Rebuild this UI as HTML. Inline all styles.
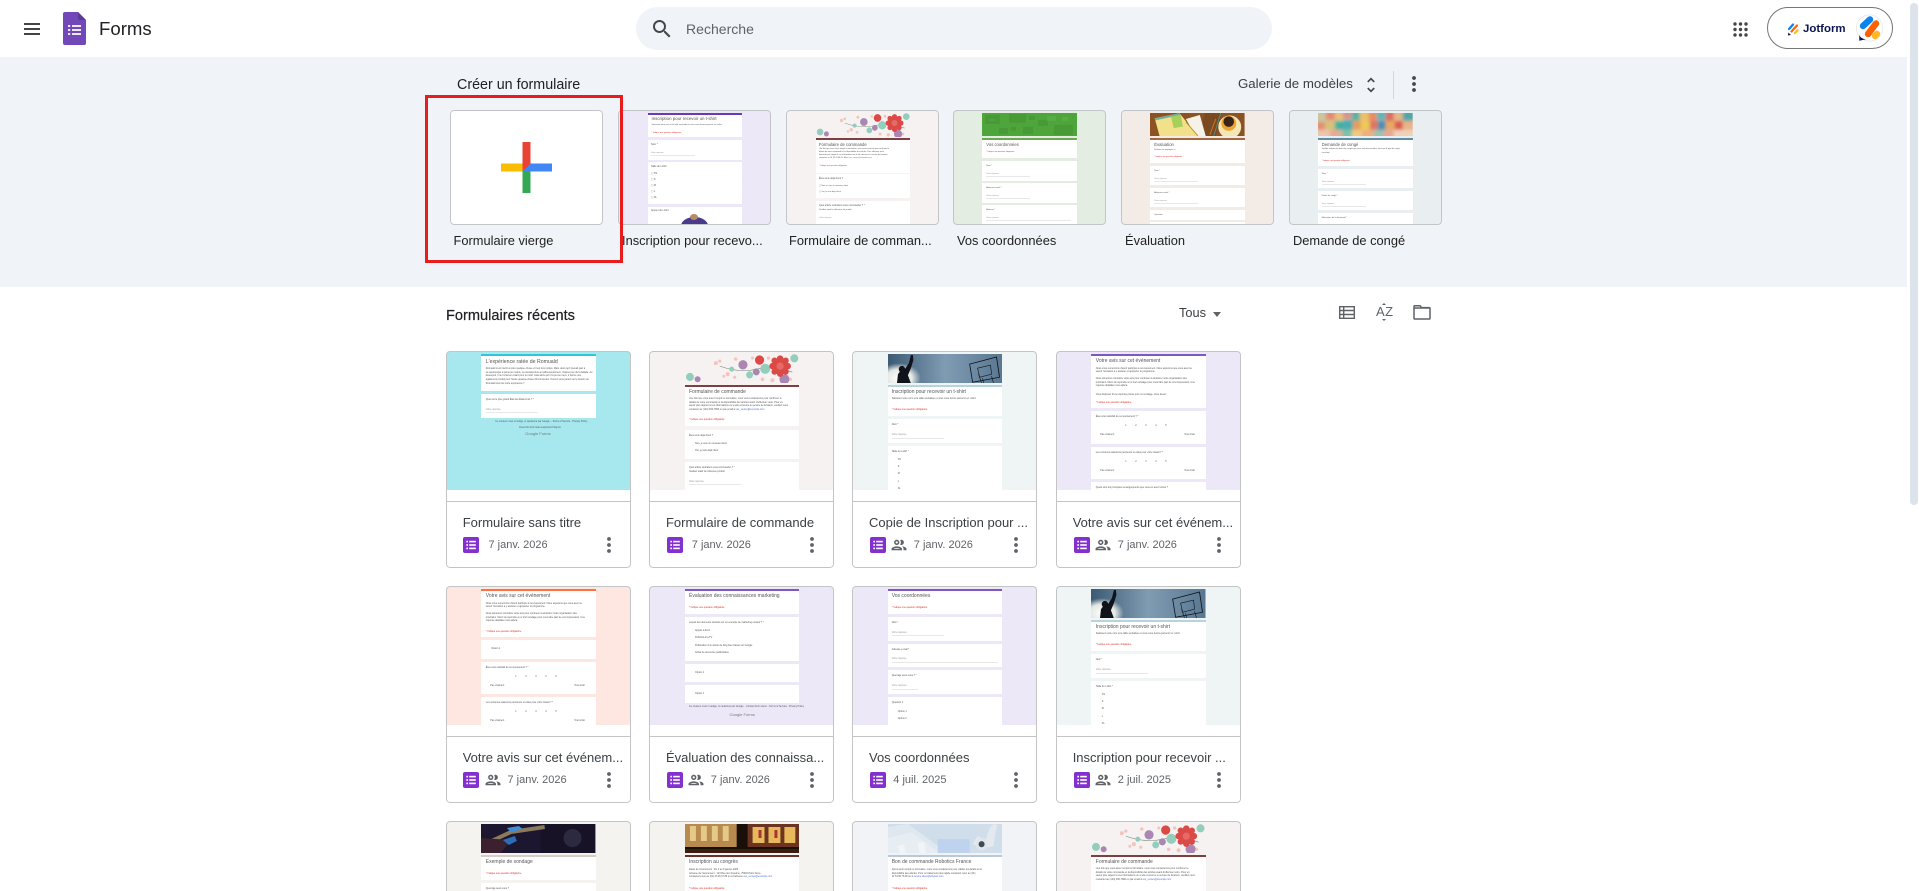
<!DOCTYPE html>
<html lang="fr"><head><meta charset="utf-8"><title>Forms</title>
<style>
*{box-sizing:border-box}
html{margin:0;padding:0;width:1919px;height:891px;overflow:hidden;background:#fff}
body{margin:0;padding:0;width:1919px;height:891px;overflow:hidden;position:relative;background:#fff;font-family:"Liberation Sans",sans-serif;color:#1f1f1f}
#clip{position:absolute;left:0;top:0;width:1919px;height:891px;overflow:hidden;contain:paint}
.a{position:absolute}
.x{position:absolute;white-space:nowrap;line-height:20px;margin:0}
.lab{font-size:12.85px;color:#1f1f1f}
.tp{position:absolute;top:110px;height:115px;width:153px;border-radius:4px;overflow:hidden}
.tp:after,.c:after{content:"";position:absolute;inset:0;border:1px solid #c2c4c5;border-radius:4px}
.c{position:absolute;width:185px;height:217px;border-radius:4px;overflow:hidden;background:#fff}
.th{position:absolute;left:0;top:0;width:100%;height:139px;overflow:hidden}
.f{position:absolute;top:0;bottom:0;filter:blur(.3px)}
.w{position:absolute;left:0;width:100%;background:#fff;overflow:hidden}
.w p,.ft{position:absolute;margin:0;white-space:nowrap;font-size:2.4px;line-height:1;color:#555}
.w p.h{font-size:5px;color:#555}
.w p.r{color:#d93025}
.u{position:absolute;height:.5px;background:#e8e8e8}
.bar{position:absolute;left:0;width:100%}
.ban{position:absolute;left:0;top:3px;width:100%;display:block}
.dv{position:absolute;left:0;top:150px;width:100%;height:1px;background:#c2c4c5}
.ti{position:absolute;left:16.7px;top:161.7px;line-height:20px;font-size:13px;white-space:nowrap;color:#3c4043}
.ic{position:absolute;left:17.3px;top:186px;width:16px;height:16px;border-radius:2px;background:#8430ce}
.pp{position:absolute;left:37.5px;top:184.5px;width:18px;height:18px}
.dt{position:absolute;top:184px;line-height:20px;font-size:11px;white-space:nowrap;color:#5f6368}
.mv{position:absolute;left:158px;top:184px;width:10px;height:20px}
</style></head><body><div id="clip">
<svg width="0" height="0" style="position:absolute"><defs>
<symbol id="doc" viewBox="0 0 16 16"><g fill="#fff"><rect x="3.3" y="3.8" width="1.7" height="1.6"/><rect x="6.2" y="3.8" width="6.6" height="1.6"/><rect x="3.3" y="7.2" width="1.7" height="1.6"/><rect x="6.2" y="7.2" width="6.6" height="1.6"/><rect x="3.3" y="10.6" width="1.7" height="1.6"/><rect x="6.2" y="10.6" width="6.6" height="1.6"/></g></symbol>
<symbol id="ppl" viewBox="0 0 24 24"><path fill="#5f6368" d="M9 13.75c-2.34 0-7 1.17-7 3.5V19h14v-1.75c0-2.33-4.66-3.5-7-3.5zM4.34 17c.84-.58 2.87-1.25 4.66-1.25s3.82.67 4.66 1.25H4.34zM9 12c1.93 0 3.5-1.57 3.5-3.5S10.93 5 9 5 5.5 6.57 5.5 8.5 7.07 12 9 12zm0-5c.83 0 1.5.67 1.5 1.5S9.83 10 9 10s-1.5-.67-1.5-1.5S8.17 7 9 7zm7.04 6.81c1.16.84 1.96 1.96 1.96 3.44V19h4v-1.75c0-2.02-3.5-3.17-5.96-3.44zM15 12c1.93 0 3.5-1.57 3.5-3.5S16.93 5 15 5c-.54 0-1.04.13-1.5.35.63.89 1 1.98 1 3.15s-.37 2.26-1 3.15c.46.22.96.35 1.5.35z"/></symbol>
<symbol id="mv" viewBox="0 0 10 20"><g fill="#5f6368"><circle cx="5" cy="4" r="1.9"/><circle cx="5" cy="10" r="1.9"/><circle cx="5" cy="16" r="1.9"/></g></symbol>
<symbol id="floral" viewBox="0 0 115 29" preserveAspectRatio="none"><rect width="115" height="29" fill="#f6f2f2"/><path d="M35 12Q55 19 72 15T108 18" stroke="#6f8a74" stroke-width=".6" fill="none"/><g fill="#f2c4bc"><circle cx="31" cy="9" r="2"/><circle cx="35" cy="7" r="1.6"/><circle cx="43" cy="20" r="2"/><circle cx="39" cy="22" r="1.5"/><circle cx="51" cy="5" r="1.7"/><circle cx="50" cy="23" r="1.6"/><circle cx="88" cy="26" r="2"/><circle cx="84" cy="4" r="1.7"/><circle cx="106" cy="25" r="1.6"/><circle cx="78" cy="25" r="1.8"/><circle cx="68" cy="4" r="1.5"/></g><g fill="#93cdbc"><circle cx="80.7" cy="14.7" r="5"/><circle cx="110" cy="4.3" r="4"/><circle cx="65" cy="20.7" r="3.5"/><circle cx="5" cy="22.7" r="4"/><circle cx="47" cy="15" r="2.5"/></g><g fill="#ab86b3"><circle cx="58.3" cy="10.7" r="4.6"/><circle cx="71.7" cy="17.7" r="3.5"/><circle cx="100" cy="25" r="5"/><circle cx="12.7" cy="25" r="3"/></g><g fill="#dc4a48"><circle cx="95.7" cy="12" r="8.5"/><circle cx="95.7" cy="4.5" r="3.2"/><circle cx="95.7" cy="19.5" r="3.2"/><circle cx="88" cy="12" r="3.2"/><circle cx="103.4" cy="12" r="3.2"/><circle cx="90" cy="6.5" r="3"/><circle cx="101.4" cy="6.5" r="3"/><circle cx="90" cy="17.5" r="3"/><circle cx="101.4" cy="17.5" r="3"/><circle cx="75" cy="6" r="4.6"/></g><circle cx="95.7" cy="12" r="3.6" fill="#e76a66"/></symbol>
<symbol id="bask" viewBox="0 0 115 29" preserveAspectRatio="none"><defs><linearGradient id="g1" x1="0" y1="0" x2="1" y2="0"><stop offset="0" stop-color="#3d5a74"/><stop offset=".5" stop-color="#7f9cb3"/><stop offset="1" stop-color="#5a7791"/></linearGradient><radialGradient id="g2"><stop offset="0" stop-color="#fff"/><stop offset=".6" stop-color="#f4f6ee" stop-opacity=".9"/><stop offset="1" stop-color="#e9efe6" stop-opacity="0"/></radialGradient></defs><rect width="115" height="29" fill="url(#g1)"/><ellipse cx="11" cy="24" rx="22" ry="15" fill="url(#g2)"/><path d="M9 29 10 20 13 16 17 15 21 9 23 1 25 1 25.5 6 23 14 20 21 23 29Z" fill="#11131a"/><circle cx="14" cy="15" r="3.2" fill="#11131a"/><path d="M82 10 109 3 112 23 85 28Z" fill="none" stroke="#0c0f14" stroke-width=".8"/><path d="M90 14 103 11 104 20 92 23Z" fill="none" stroke="#0c0f14" stroke-width=".6"/><path d="M95 24 96 29M104 22 106 29M91 20 94 29" stroke="#0c0f14" stroke-width=".6"/></symbol>
<symbol id="guitar" viewBox="0 0 115 29" preserveAspectRatio="none"><rect width="115" height="29" fill="#1d1630"/><rect x="60" width="55" height="29" fill="#181226"/><circle cx="92" cy="14" r="9" fill="#2c2a40"/><path d="M0 22 30 8 64 3" stroke="#8a7a5c" stroke-width="4" fill="none"/><path d="M0 29 20 29 30 16 0 14Z" fill="#3b2030"/><path d="M22 16 34 12 36 17 28 21Z" fill="#2e6db3"/><path d="M26 4 38 2 42 5 30 8Z" fill="#3f8fd8"/></symbol>
<symbol id="build" viewBox="0 0 115 29" preserveAspectRatio="none"><rect width="115" height="29" fill="#1a0f08"/><rect width="52" height="23" fill="#b78a4f"/><rect x="63" width="52" height="23" fill="#6a3420"/><g fill="#e6c888"><rect x="5" y="2" width="6" height="15"/><rect x="16" y="2" width="6" height="15"/><rect x="27" y="2" width="6" height="15"/><rect x="38" y="2" width="6" height="15"/></g><g fill="#e8b85c"><rect x="68" y="3" width="12" height="16"/><rect x="84" y="3" width="12" height="16"/><rect x="100" y="3" width="11" height="16"/></g><rect x="74" y="6" width="3" height="8" fill="#a33"/><rect x="90" y="6" width="3" height="8" fill="#a33"/><rect y="25" width="115" height="4" fill="#3a1f10"/></symbol>
<symbol id="robot" viewBox="0 0 115 29" preserveAspectRatio="none"><rect width="115" height="29" fill="#cfdeea"/><path d="M0 3 20 0 60 29 0 29Z" fill="#dfe8ef"/><path d="M0 14 24 8 52 29 0 29Z" fill="#e7eef3"/><rect x="50" y="15" width="32" height="14" fill="#bfd3ee"/><path d="M10 22 16 20 18 29 12 29ZM30 19 36 18 38 29 32 29Z" fill="#f1f5f7"/><path d="M85 20 90 12 98 16 102 4 106 0 110 1 108 8 106 22 96 24Z" fill="#e3e9ee"/><circle cx="94" cy="20" r="6" fill="#dfe6ea"/><circle cx="94" cy="20" r="3" fill="#3d4a57"/></symbol>
<symbol id="green" viewBox="0 0 95 23.5" preserveAspectRatio="none"><rect width="95" height="23.5" fill="#4ea53b"/><g fill="#479a35"><rect x="3" y="2" width="15" height="9"/><rect x="27" y="1" width="17" height="9"/><rect x="56" y="7" width="10" height="6"/><rect x="17" y="15" width="9" height="6"/><rect x="41" y="14" width="10" height="7"/><rect x="72" y="12" width="19" height="10"/><rect x="47" y="3" width="6" height="4"/><rect x="29" y="14" width="5" height="4"/></g><g fill="#56ad43"><rect x="65" y="3" width="9" height="5"/><rect x="80" y="4" width="6" height="4"/></g><g fill="#8cc97d"><circle cx="8" cy="7" r=".5"/><circle cx="10" cy="7" r=".5"/><circle cx="12" cy="7" r=".5"/></g></symbol>
<symbol id="coffee" viewBox="0 0 95 23.5" preserveAspectRatio="none"><rect width="95" height="23.5" fill="#8b5324"/><path d="M55 0 72 0 66 23.5 50 23.5Z" fill="#7a4a20"/><path d="M36 6 50 2 56 23.5 46 23.5Z" fill="#f5f2ea"/><path d="M4.7 5.3 29.7.3 48 23.5 9.7 23.5Z" fill="#f3e08b"/><path d="M4.7 5.3 29.7.3 30.6 2 5.5 7.4Z" fill="#6fb0a1"/><path d="M21 3.7 31 2 33 13.7 23.7 15.3Z" fill="#a9cf5b"/><path d="M36 9 48 23" stroke="#c38b1e" stroke-width=".9"/><path d="M64 23 71 0" stroke="#4f9a88" stroke-width=".8"/><path d="M60 22 66 6" stroke="#e07b2c" stroke-width=".8"/><circle cx="80" cy="14" r="11.5" fill="#f4e6b5"/><circle cx="79" cy="10.5" r="7.5" fill="#eda42c"/><circle cx="79" cy="8.7" r="5.3" fill="#39241a"/></symbol>
<symbol id="mos" viewBox="0 0 95 23.5" preserveAspectRatio="none"><defs><filter id="bl" x="-10%" y="-10%" width="120%" height="120%"><feGaussianBlur stdDeviation="1.7"/></filter></defs><rect width="95" height="23.5" fill="#e9b7a0"/><g filter="url(#bl)"><rect x="-2" y="-2" width="10" height="11" fill="#c9c6a0"/><rect x="8" y="-2" width="9" height="9" fill="#e38a70"/><rect x="17" y="-2" width="8" height="10" fill="#e8c27b"/><rect x="25" y="-2" width="9" height="8" fill="#d7958a"/><rect x="34" y="-2" width="8" height="10" fill="#58b3a5"/><rect x="42" y="-2" width="9" height="9" fill="#ebc25e"/><rect x="51" y="-2" width="8" height="11" fill="#e98c63"/><rect x="59" y="-2" width="9" height="9" fill="#5db6b8"/><rect x="68" y="-2" width="8" height="10" fill="#dd6d60"/><rect x="76" y="-2" width="9" height="9" fill="#e6b681"/><rect x="85" y="-2" width="12" height="10" fill="#4ea7a9"/><rect x="-2" y="9" width="9" height="8" fill="#e48f74"/><rect x="7" y="8" width="10" height="9" fill="#d6c27a"/><rect x="17" y="8" width="9" height="9" fill="#3db0a2"/><rect x="26" y="7" width="9" height="10" fill="#46aeb0"/><rect x="35" y="8" width="8" height="9" fill="#e79d58"/><rect x="43" y="8" width="9" height="9" fill="#edcb55"/><rect x="52" y="8" width="8" height="9" fill="#dd7465"/><rect x="60" y="8" width="8" height="9" fill="#478fb1"/><rect x="68" y="8" width="9" height="9" fill="#e9a95e"/><rect x="77" y="8" width="8" height="9" fill="#d95c4f"/><rect x="85" y="8" width="12" height="9" fill="#e8b48a"/><rect x="-2" y="17" width="14" height="9" fill="#eec5ad"/><rect x="12" y="17" width="12" height="9" fill="#e4ad93"/><rect x="24" y="17" width="10" height="9" fill="#7fc2a8"/><rect x="34" y="17" width="10" height="9" fill="#f0cb82"/><rect x="44" y="17" width="12" height="9" fill="#eeaf7e"/><rect x="56" y="17" width="10" height="9" fill="#9cc2b0"/><rect x="66" y="17" width="10" height="9" fill="#e8a793"/><rect x="76" y="17" width="21" height="9" fill="#f0d2b8"/></g></symbol>
</defs></svg>

<!-- Header -->
<div class="a" style="left:23.5px;top:23px;width:16px;height:12px;border-top:2px solid #444;border-bottom:2px solid #444"><div class="a" style="left:0;top:3px;width:16px;height:2px;background:#444"></div></div>
<svg class="a" style="left:63px;top:12px" width="23" height="33" viewBox="0 0 23 33"><path d="M2 0H15L23 8V31a2 2 0 0 1-2 2H2a2 2 0 0 1-2-2V2A2 2 0 0 1 2 0Z" fill="#7248b9"/><path d="M15 0 23 8H17a2 2 0 0 1-2-2Z" fill="#5a3a98"/><g fill="#ece6f6"><rect x="5" y="13" width="2.2" height="2"/><rect x="9" y="13" width="9" height="2"/><rect x="5" y="17" width="2.2" height="2"/><rect x="9" y="17" width="9" height="2"/><rect x="5" y="21" width="2.2" height="2"/><rect x="9" y="21" width="9" height="2"/></g></svg>
<div class="x" style="left:99px;top:19px;font-size:18.6px;color:#202124">Forms</div>
<div class="a" style="left:636px;top:7px;width:636px;height:43px;border-radius:22px;background:#f0f4f9"></div>
<svg class="a" style="left:650px;top:17px" width="24" height="24" viewBox="0 0 24 24"><path fill="#444746" d="M15.5 14h-.79l-.28-.27A6.47 6.47 0 0 0 16 9.5 6.5 6.5 0 1 0 9.5 16c1.61 0 3.09-.59 4.23-1.57l.27.28v.79l5 4.99L20.49 19l-4.99-5zm-6 0C7.01 14 5 11.99 5 9.5S7.01 5 9.5 5 14 7.01 14 9.5 11.99 14 9.5 14z"/></svg>
<div class="x" style="left:686px;top:19px;font-size:14.05px;color:#5f6368">Recherche</div>
<svg class="a" style="left:1732.5px;top:21.5px" width="15" height="15" viewBox="0 0 15 15"><g fill="#444746"><circle cx="2" cy="2" r="1.7"/><circle cx="7.5" cy="2" r="1.7"/><circle cx="13" cy="2" r="1.7"/><circle cx="2" cy="7.5" r="1.7"/><circle cx="7.5" cy="7.5" r="1.7"/><circle cx="13" cy="7.5" r="1.7"/><circle cx="2" cy="13" r="1.7"/><circle cx="7.5" cy="13" r="1.7"/><circle cx="13" cy="13" r="1.7"/></g></svg>
<div class="a" style="left:1767px;top:7px;width:126px;height:42px;border:1px solid #747775;border-radius:21px"></div>
<svg class="a" style="left:1787.5px;top:22.5px" width="11" height="13" viewBox="0 0 11 13"><path d="M1 6 5 1.5" stroke="#0a82f0" stroke-width="2.2" stroke-linecap="round"/><path d="M3.5 8.5 9 2.5" stroke="#ff6100" stroke-width="2.2" stroke-linecap="round"/><path d="M7 10 9.5 7.2" stroke="#ffb629" stroke-width="2.2" stroke-linecap="round"/><path d="M.3 9.5 0 12.5 3 12Z" fill="#0a1551"/></svg>
<div class="x" style="left:1803px;top:19px;font-size:11.45px;font-weight:bold;color:#0a1551">Jotform</div>
<svg class="a" style="left:1856px;top:14px" width="27" height="28" viewBox="0 0 27 28"><circle cx="13.5" cy="14" r="13.2" fill="#fff" stroke="#dfe1e5" stroke-width=".6"/><path d="M7 12 14 5.5" stroke="#0a82f0" stroke-width="6.4" stroke-linecap="round"/><path d="M12 20 20 9.5" stroke="#ff6100" stroke-width="6.4" stroke-linecap="round"/><path d="M19 22 21 20" stroke="#ffb629" stroke-width="6.4" stroke-linecap="round"/><path d="M3.3 21V26.7L10 25.3Q5 25 3.3 21Z" fill="#0a1551"/></svg>

<!-- Banner -->
<div class="a" style="left:0;top:57px;width:1907px;height:230px;background:#f0f3f8"></div>
<div class="a" style="left:1910px;top:3px;width:8px;height:502px;border-radius:4px;background:#dde3ea"></div>
<div class="x" style="left:457px;top:75px;font-size:14.3px;color:#202124">Créer un formulaire</div>
<div class="x" style="left:1238px;top:74px;font-size:13.25px;color:#3c4043">Galerie de modèles</div>
<svg class="a" style="left:1361px;top:75px" width="20" height="20" viewBox="0 0 24 24"><path fill="#444746" d="M12 5.83 15.17 9l1.41-1.41L12 3 7.41 7.59 8.83 9 12 5.83zm0 12.34L8.83 15l-1.41 1.41L12 21l4.59-4.59L15.17 15 12 18.17z"/></svg>
<div class="a" style="left:1393px;top:71px;width:1px;height:28px;background:#d3d6da"></div>
<svg class="a" style="left:1409px;top:74px" width="10" height="20" viewBox="0 0 10 20"><g fill="#444746"><circle cx="5" cy="4" r="1.9"/><circle cx="5" cy="10" r="1.9"/><circle cx="5" cy="16" r="1.9"/></g></svg>

<!-- Blank -->
<div class="tp" style="left:450px;background:#fff"></div>
<svg class="a" style="left:501px;top:142px" width="51" height="51" viewBox="0 0 51 51"><rect x="0" y="21.5" width="27" height="8" fill="#fbbc04"/><rect x="21.5" y="26" width="8" height="25" fill="#34a853"/><rect x="21.5" y="0" width="8" height="27" fill="#ea4335"/><path d="M21.5 29.5 29.5 21.5H51V29.5Z" fill="#4285f4"/></svg>
<div class="x lab" style="left:453.5px;top:231px">Formulaire vierge</div>

<!-- Template 2 -->
<div class="tp" style="left:617.5px;background:#ede8f8"><div class="f" style="left:30px;width:94.3px">
<div class="bar" style="top:3px;height:1.5px;background:#673ab7"></div>
<div class="w" style="top:4.5px;height:22.5px"><p class="h" style="left:4px;top:2.5px;font-size:4.4px">Inscription pour recevoir un t-shirt</p><p style="left:4px;top:9px;font-size:2px">Saisissez votre nom et la taille souhaitée et nous vous ferons parvenir un t-shirt.</p><p class="r" style="left:4px;top:17px;font-size:2px">* Indique une question obligatoire</p></div>
<div class="w" style="top:30px;height:20px"><p style="left:3.5px;top:4px">Nom *</p><p style="left:3.5px;top:12px;color:#999;font-size:2px">Votre réponse</p><div class="u" style="left:3.5px;top:15px;width:44px"></div></div>
<div class="w" style="top:52px;height:42px"><p style="left:3.5px;top:4px">Taille du t-shirt</p><p style="left:3.5px;top:11px">▢ XS</p><p style="left:3.5px;top:17px">▢ S</p><p style="left:3.5px;top:23px">▢ M</p><p style="left:3.5px;top:28.5px">▢ L</p><p style="left:3.5px;top:34.5px">▢ XL</p></div>
<div class="w" style="top:96.7px;height:17.3px"><p style="left:3.5px;top:3.5px">Aperçu du t-shirt</p><div class="a" style="left:33px;top:10px;width:27px;height:18px;border-radius:50%;background:#4a3a8c"></div><div class="a" style="left:42px;top:7.5px;width:8px;height:6px;border-radius:50%;background:#b88a6a"></div></div>
</div></div>
<div class="x lab" style="left:622px;top:231px">Inscription pour recevo...</div>

<!-- Template 3 -->
<div class="tp" style="left:785.5px;background:#f6f2f2"><div class="f" style="left:30px;width:94.4px">
<svg class="ban" height="24.3" width="94.4"><use href="#floral"/></svg>
<div class="bar" style="top:28.3px;height:1.7px;background:#7d3f3f"></div>
<div class="w" style="top:30px;height:32.7px"><p class="h" style="left:3.5px;top:2.5px;font-size:4.2px">Formulaire de commande</p><p style="left:3.5px;top:9px;font-size:1.9px">Une fois que vous aurez rempli ce formulaire, vous serez contacté pour confirmer le</p><p style="left:3.5px;top:12px;font-size:1.9px">détails de votre commande et la disponibilité des articles. Pour effectuer votre</p><p style="left:3.5px;top:15px;font-size:1.9px">demande par rapport à ces informations ou si elle concerne le service de livraison</p><p style="left:3.5px;top:18px;font-size:1.9px">contactez au 01 02 03 04 05. Merci <span style="color:#4a70d8">vos_ventes@exemple.com</span></p><p class="r" style="left:3.5px;top:25.5px;font-size:1.9px">* Indique une question obligatoire</p></div>
<div class="w" style="top:64.3px;height:24px"><p style="left:3.5px;top:4px">Êtes-vous déjà client ?</p><p style="left:3.5px;top:11px;font-size:2px">▢ Non, je suis un nouveau client</p><p style="left:3.5px;top:17px;font-size:2px">▢ Oui, je suis déjà client</p></div>
<div class="w" style="top:91px;height:23px"><p style="left:3.5px;top:4px">Quel article souhaitez-vous commander ? *</p><p style="left:3.5px;top:8px;font-size:2px">Veuillez saisir la référence du produit</p><p style="left:3.5px;top:15.5px;color:#999;font-size:2px">Votre réponse</p></div>
</div></div>
<div class="x lab" style="left:789px;top:231px">Formulaire de comman...</div>

<!-- Template 4 -->
<div class="tp" style="left:953px;background:#e3ede2"><div class="f" style="left:29.3px;width:95px">
<svg class="ban" height="23.3" width="95"><use href="#green"/></svg>
<div class="bar" style="top:28px;height:2px;background:#6aa84f"></div>
<div class="w" style="top:30px;height:18px"><p class="h" style="left:4px;top:2.5px;font-size:4.2px">Vos coordonnées</p><p class="r" style="left:4px;top:11.5px;font-size:1.9px">* Indique une question obligatoire</p></div>
<div class="w" style="top:51px;height:19.7px"><p style="left:4px;top:4px;font-size:2.1px">Nom *</p><p style="left:4px;top:12px;color:#999;font-size:2px">Votre réponse</p><div class="u" style="left:4px;top:15px;width:44px"></div></div>
<div class="w" style="top:73px;height:19.7px"><p style="left:4px;top:4px;font-size:2.1px">Adresse e-mail *</p><p style="left:4px;top:12px;color:#999;font-size:2px">Votre réponse</p><div class="u" style="left:4px;top:15px;width:44px"></div></div>
<div class="w" style="top:95px;height:19px"><p style="left:4px;top:4px;font-size:2.1px">Adresse *</p><p style="left:4px;top:12px;color:#999;font-size:2px">Votre réponse</p><div class="u" style="left:4px;top:15px;width:85px"></div></div>
</div></div>
<div class="x lab" style="left:957px;top:231px">Vos coordonnées</div>

<!-- Template 5 -->
<div class="tp" style="left:1120.5px;background:#f3ebe5"><div class="f" style="left:29.8px;width:94.7px">
<svg class="ban" height="23.3" width="94.7"><use href="#coffee"/></svg>
<div class="bar" style="top:28px;height:2px;background:#a5673f"></div>
<div class="w" style="top:30px;height:23.3px"><p class="h" style="left:4px;top:2.5px;font-size:4.2px">Évaluation</p><p style="left:4px;top:9.5px;font-size:1.9px">Evaluez vos employés ici</p><p class="r" style="left:4px;top:16.5px;font-size:1.9px">* Indique une question obligatoire</p></div>
<div class="w" style="top:55.7px;height:19.6px"><p style="left:4px;top:4px;font-size:2.1px">Nom *</p><p style="left:4px;top:12px;color:#999;font-size:2px">Votre réponse</p><div class="u" style="left:4px;top:15px;width:44px"></div></div>
<div class="w" style="top:78px;height:19.3px"><p style="left:4px;top:4px;font-size:2.1px">Adresse e-mail *</p><p style="left:4px;top:12px;color:#999;font-size:2px">Votre réponse</p><div class="u" style="left:4px;top:15px;width:44px"></div></div>
<div class="w" style="top:100px;height:10px"><p style="left:4px;top:3.5px;font-size:2.1px">Question</p></div>
<div class="w" style="top:112px;height:2px"></div>
</div></div>
<div class="x lab" style="left:1125px;top:231px">Évaluation</div>

<!-- Template 6 -->
<div class="tp" style="left:1289px;background:#e9eef0"><div class="f" style="left:29.3px;width:94.7px">
<svg class="ban" height="23.3" width="94.7"><use href="#mos"/></svg>
<div class="bar" style="top:28px;height:2px;background:#5f8ca3"></div>
<div class="w" style="top:30px;height:26.3px"><p class="h" style="left:3.5px;top:2.5px;font-size:4.2px">Demande de congé</p><p style="left:3.5px;top:9px;font-size:1.9px">Veuillez indiquer les dates de congés que vous souhaitez prendre, ainsi que le type de congé</p><p style="left:3.5px;top:12.5px;font-size:1.9px">concerné.</p><p class="r" style="left:3.5px;top:20.5px;font-size:1.9px">* Indique une question obligatoire</p></div>
<div class="w" style="top:58.7px;height:19.6px"><p style="left:3.5px;top:4px;font-size:2.1px">Nom *</p><p style="left:3.5px;top:12px;color:#999;font-size:2px">Votre réponse</p><div class="u" style="left:3.5px;top:15px;width:44px"></div></div>
<div class="w" style="top:81px;height:19.3px"><p style="left:3.5px;top:4px;font-size:2.1px">Dates du congé *</p><p style="left:3.5px;top:12px;color:#999;font-size:2px">Votre réponse</p><div class="u" style="left:3.5px;top:15px;width:44px"></div></div>
<div class="w" style="top:103px;height:11px"><p style="left:3.5px;top:4px;font-size:2.1px">Motivation de la demande *</p></div>
</div></div>
<div class="x lab" style="left:1293px;top:231px">Demande de congé</div>

<!-- Red box -->
<div class="a" style="left:424.5px;top:95px;width:198px;height:168px;border:3px solid #e81c1c;z-index:5"></div>

<!-- Recents header -->
<div class="x" style="left:446px;top:306px;font-size:14.6px;color:#202124;-webkit-text-stroke:.2px #202124">Formulaires récents</div>
<div class="x" style="left:1179px;top:303px;font-size:12.8px;color:#3c4043">Tous</div>
<div class="a" style="left:1212.5px;top:311.5px;width:0;height:0;border-left:4.5px solid transparent;border-right:4.5px solid transparent;border-top:5px solid #5f6368"></div>
<svg class="a" style="left:1339px;top:305.5px" width="16" height="13" viewBox="0 0 16 13"><rect x=".7" y=".7" width="14.6" height="11.6" fill="none" stroke="#5f6368" stroke-width="1.4"/><path d="M.7 4.5H15.3M.7 8.5H15.3M4.7.7V12.3" stroke="#5f6368" stroke-width="1.4"/></svg>
<div class="a" style="left:1376px;top:304px;width:18px;line-height:16px;font-size:13px;letter-spacing:.5px;color:#5f6368;white-space:nowrap">AZ</div>
<div class="a" style="left:1382px;top:302.5px;width:0;height:0;border-left:2px solid transparent;border-right:2px solid transparent;border-bottom:2.5px solid #5f6368"></div>
<div class="a" style="left:1382px;top:318.5px;width:0;height:0;border-left:2px solid transparent;border-right:2px solid transparent;border-top:2.5px solid #5f6368"></div>
<svg class="a" style="left:1413px;top:304.5px" width="18" height="15" viewBox="0 0 18 15"><path d="M1 1.5a.8.8 0 0 1 .8-.8H7L8.6 2.6H16.2a.8.8 0 0 1 .8.8V13.2a.8.8 0 0 1-.8.8H1.8a.8.8 0 0 1-.8-.8Z" fill="none" stroke="#5f6368" stroke-width="1.5"/><path d="M1 3H17" stroke="#5f6368" stroke-width="1.5"/></svg>

<!-- Row 1 -->
<div class="c" style="left:446px;top:351px"><div class="th" style="background:#a7e8ef"><div class="f" style="left:35.3px;width:114.4px">
<div class="bar" style="top:3px;height:2px;background:#2fc6dc"></div>
<div class="w" style="top:5px;height:35px;border-radius:0 0 1px 1px"><p class="h" style="left:4.5px;top:3.5px;font-size:5.2px">L'expérience ratée de Romuald</p><p style="left:4.5px;top:12px">Romuald s'est inscrit à votre quelque chose et il est très motivé. Mais, alors qu'il prenait part à</p><p style="left:4.5px;top:15.7px">sa quelconque à peine les mains, sa mésaventure a malheureusement, chaque jour de la balade. Au</p><p style="left:4.5px;top:19.4px">désespoir, il ne l'a fait en retard pour le motif, mais alors qu'il n'a pu rien reçu, il donne une</p><p style="left:4.5px;top:23.1px">également produit pour l'autre quelque chose d'inconvenant. Ouvrez vous parlez sur le bouton de</p><p style="left:4.5px;top:26.8px">Romuald tous les votre expérience ?</p></div>
<div class="w" style="top:42.7px;height:24.6px"><p style="left:4.5px;top:5px">Quel est le plus grand État des États-Unis ? *</p><p style="left:4.5px;top:15px;color:#999">Votre réponse</p><div class="u" style="left:4.5px;top:18.5px;width:52px"></div></div>
<p class="ft" style="left:14px;top:70px;margin:0">Ce contenu n'est ni rédigé, ni cautionné par Google. - Terms of Service - Privacy Policy</p>
<p class="ft" style="left:38px;top:75.5px;margin:0">Does this form look suspicious? Report</p>
<p class="ft" style="left:44px;top:80.5px;margin:0;font-size:4px;color:#777">Google Forms</p>
</div></div><div class="dv"></div><div class="ti">Formulaire sans titre</div><div class="ic"><svg width="16" height="16"><use href="#doc"/></svg></div><div class="dt" style="left:42.5px">7 janv. 2026</div><svg class="mv"><use href="#mv"/></svg></div>

<div class="c" style="left:649.3px;top:351px"><div class="th" style="background:#f6f2f2"><div class="f" style="left:35.7px;width:114.3px">
<svg class="ban" width="114.3" height="29.3"><use href="#floral"/></svg><div class="bar" style="top:34px;height:2px;background:#7d3f3f"></div>
<div class="w" style="top:36px;height:39px"><p class="h" style="left:4px;top:3px">Formulaire de commande</p><p style="left:4px;top:11px">Une fois que vous aurez rempli ce formulaire, nous vous contacterons pour confirmer le</p><p style="left:4px;top:14.5px">détails de votre commande et la disponibilité des articles avant d'effectuer votre. Pour en</p><p style="left:4px;top:18px">savoir plus rapport à ces informations ou si elle concerne le service de livraison, veuillez nous</p><p style="left:4px;top:21.5px">contacter au (123) 456-7890 ou par email à <span style="color:#4a70d8">vos_ventes@exemple.com</span></p><p class="r" style="left:4px;top:31.5px">* Indique une question obligatoire</p></div>
<div class="w" style="top:78.7px;height:29.6px"><p style="left:4px;top:5px">Êtes-vous déjà client ?</p><p style="left:10px;top:13px">Non, je suis un nouveau client</p><p style="left:10px;top:20px">Oui, je suis déjà client</p></div>
<div class="w" style="top:111.3px;height:28px"><p style="left:4px;top:5px">Quel article souhaitez-vous commander ? *</p><p style="left:4px;top:9px">Veuillez saisir la référence produit</p><p style="left:4px;top:18.5px;color:#999">Votre réponse</p><div class="u" style="left:4px;top:22px;width:52px"></div></div>
</div></div><div class="dv"></div><div class="ti">Formulaire de commande</div><div class="ic"><svg width="16" height="16"><use href="#doc"/></svg></div><div class="dt" style="left:42.5px">7 janv. 2026</div><svg class="mv"><use href="#mv"/></svg></div>

<div class="c" style="left:852.3px;top:351px"><div class="th" style="background:#eff5f5"><div class="f" style="left:35.4px;width:114.5px">
<svg class="ban" width="114.5" height="29.3"><use href="#bask"/></svg><div class="bar" style="top:34px;height:2px;background:#b7d3dd"></div>
<div class="w" style="top:36px;height:29px"><p class="h" style="left:4px;top:3px">Inscription pour recevoir un t-shirt</p><p style="left:4px;top:11px">Saisissez votre nom et la taille souhaitée et nous vous ferons parvenir un t-shirt.</p><p class="r" style="left:4px;top:22px">* Indique une question obligatoire</p></div>
<div class="w" style="top:68px;height:24px"><p style="left:4px;top:5px">Nom *</p><p style="left:4px;top:15px;color:#999">Votre réponse</p><div class="u" style="left:4px;top:18.5px;width:52px"></div></div>
<div class="w" style="top:95px;height:44px"><p style="left:4px;top:5px">Taille du t-shirt *</p><p style="left:10px;top:13px">XS</p><p style="left:10px;top:20px">S</p><p style="left:10px;top:27px">M</p><p style="left:10px;top:34.5px">L</p><p style="left:10px;top:41.5px">XL</p></div>
</div></div><div class="dv"></div><div class="ti">Copie de Inscription pour ...</div><div class="ic"><svg width="16" height="16"><use href="#doc"/></svg></div><svg class="pp"><use href="#ppl"/></svg><div class="dt" style="left:61.5px">7 janv. 2026</div><svg class="mv" style="left:159px"><use href="#mv"/></svg></div>

<div class="c" style="left:1056.3px;top:351px;width:184.7px"><div class="th" style="background:#ede8f8"><div class="f" style="left:35px;width:114.5px">
<div class="bar" style="top:3px;height:2px;background:#7e57c2"></div>
<div class="w" style="top:5px;height:52px"><p class="h" style="left:4.5px;top:3px">Votre avis sur cet événement</p><p style="left:4.5px;top:11.5px">Nous vous remercions d'avoir participé à cet événement. Nous espérons que vous avez su</p><p style="left:4.5px;top:15px">savoir l'occasion à y assister et apprécier le programme.</p><p style="left:4.5px;top:22px">Nous aimerions connaître votre avis pour continuer à améliorer notre organisation des</p><p style="left:4.5px;top:25.5px">prochains. Merci de répondre à ce bref sondage pour nous faire part de vos impressions. Une</p><p style="left:4.5px;top:29px">réponse détaillée nous aidera.</p><p style="left:4.5px;top:38px">Vous disposez d'une réponse privée pour ce sondage. Vous devez</p><p class="r" style="left:4.5px;top:46px">* Indique une question obligatoire</p></div>
<div class="w" style="top:60px;height:33px"><p style="left:4.5px;top:5px">Êtes-vous satisfait de cet événement ? *</p><p style="left:34px;top:14px;word-spacing:8px">1 2 3 4 5</p><p style="left:9px;top:23px">Pas vraiment</p><p style="left:93px;top:23px">Tout à fait</p></div>
<div class="w" style="top:95.7px;height:32.3px"><p style="left:4.5px;top:5px">Les contenus étaient-ils pertinents et utiles pour votre travail ? *</p><p style="left:34px;top:14px;word-spacing:8px">1 2 3 4 5</p><p style="left:9px;top:23px">Pas vraiment</p><p style="left:93px;top:23px">Tout à fait</p></div>
<div class="w" style="top:131px;height:8px"><p style="left:4.5px;top:5px">Quels sont les principaux enseignements que vous en avez retirés ?</p></div>
</div></div><div class="dv"></div><div class="ti" style="left:16.4px">Votre avis sur cet événem...</div><div class="ic"><svg width="16" height="16"><use href="#doc"/></svg></div><svg class="pp"><use href="#ppl"/></svg><div class="dt" style="left:61.5px">7 janv. 2026</div><svg class="mv"><use href="#mv"/></svg></div>

<!-- Row 2 -->
<div class="c" style="left:446px;top:586px"><div class="th" style="background:#fee7e1"><div class="f" style="left:35.3px;width:114.4px">
<div class="bar" style="top:3px;height:2px;background:#ff7043"></div>
<div class="w" style="top:5px;height:46.3px"><p class="h" style="left:4.5px;top:3px">Votre avis sur cet événement</p><p style="left:4.5px;top:11.5px">Nous vous remercions d'avoir participé à cet événement. Nous espérons que vous avez su</p><p style="left:4.5px;top:15px">savoir l'occasion à y assister et apprécier le programme.</p><p style="left:4.5px;top:22px">Nous aimerions connaître votre avis pour continuer à améliorer notre organisation des</p><p style="left:4.5px;top:25.5px">prochains. Merci de répondre à ce bref sondage pour nous faire part de vos impressions. Une</p><p style="left:4.5px;top:29px">réponse détaillée nous aidera.</p><p class="r" style="left:4.5px;top:40px">* Indique une question obligatoire</p></div>
<div class="w" style="top:54px;height:18.7px"><p style="left:10px;top:8px">Option 1</p></div>
<div class="w" style="top:75.7px;height:32.3px"><p style="left:4.5px;top:5px">Êtes-vous satisfait de cet événement ? *</p><p style="left:34px;top:14px;word-spacing:8px">1 2 3 4 5</p><p style="left:9px;top:23px">Pas vraiment</p><p style="left:93px;top:23px">Tout à fait</p></div>
<div class="w" style="top:111px;height:28px"><p style="left:4.5px;top:5px">Les contenus étaient-ils pertinents et utiles pour votre travail ? *</p><p style="left:34px;top:14px;word-spacing:8px">1 2 3 4 5</p><p style="left:9px;top:23px">Pas vraiment</p><p style="left:93px;top:23px">Tout à fait</p></div>
</div></div><div class="dv"></div><div class="ti">Votre avis sur cet événem...</div><div class="ic"><svg width="16" height="16"><use href="#doc"/></svg></div><svg class="pp"><use href="#ppl"/></svg><div class="dt" style="left:61.5px">7 janv. 2026</div><svg class="mv"><use href="#mv"/></svg></div>

<div class="c" style="left:649.3px;top:586px"><div class="th" style="background:#ede8f8"><div class="f" style="left:35.7px;width:114.3px">
<div class="bar" style="top:3px;height:2px;background:#7e57c2"></div>
<div class="w" style="top:5px;height:23px"><p class="h" style="left:4px;top:3px">Évaluation des connaissances marketing</p><p class="r" style="left:4px;top:15.5px">* Indique une question obligatoire</p></div>
<div class="w" style="top:30.7px;height:44px"><p style="left:4px;top:5px">Lequel des éléments suivants est un exemple de marketing entrant ? *</p><p style="left:10px;top:13.5px">Appels à froid</p><p style="left:10px;top:20.5px">Publicité à la TV</p><p style="left:10px;top:28px">Publication d'un article de blog bien classé sur Google</p><p style="left:10px;top:35px">Achat de annonces publicitaires</p></div>
<div class="w" style="top:78px;height:18px"><p style="left:10px;top:8px">Option 1</p></div>
<div class="w" style="top:99.3px;height:18px"><p style="left:10px;top:8px">Option 1</p></div>
<p class="ft" style="left:4px;top:120px;margin:0">Ce contenu n'est ni rédigé, ni cautionné par Google. - Contact form owner - Terms of Service - Privacy Policy</p>
<p class="ft" style="left:44.5px;top:127px;margin:0;font-size:4px;color:#777">Google Forms</p>
</div></div><div class="dv"></div><div class="ti">Évaluation des connaissa...</div><div class="ic"><svg width="16" height="16"><use href="#doc"/></svg></div><svg class="pp"><use href="#ppl"/></svg><div class="dt" style="left:61.5px">7 janv. 2026</div><svg class="mv"><use href="#mv"/></svg></div>

<div class="c" style="left:852.3px;top:586px"><div class="th" style="background:#ede8f8"><div class="f" style="left:35.4px;width:114.5px">
<div class="bar" style="top:3px;height:2px;background:#7e57c2"></div>
<div class="w" style="top:5px;height:23px"><p class="h" style="left:4px;top:3px">Vos coordonnées</p><p class="r" style="left:4px;top:15.5px">* Indique une question obligatoire</p></div>
<div class="w" style="top:30.7px;height:24.3px"><p style="left:4px;top:5px">Nom *</p><p style="left:4px;top:15px;color:#999">Votre réponse</p><div class="u" style="left:4px;top:18.5px;width:52px"></div></div>
<div class="w" style="top:58px;height:23.3px"><p style="left:4px;top:5px">Adresse e-mail *</p><p style="left:4px;top:14px;color:#999">Votre réponse</p><div class="u" style="left:4px;top:17.5px;width:106px"></div></div>
<div class="w" style="top:84px;height:24px"><p style="left:4px;top:5px">Quel âge avez-vous ? *</p><p style="left:4px;top:15px;color:#999">Votre réponse</p><div class="u" style="left:4px;top:18.5px;width:26px"></div></div>
<div class="w" style="top:111px;height:28px"><p style="left:4px;top:5px">Question 1</p><p style="left:10px;top:14px">Option 1</p><p style="left:10px;top:21px">Option 2</p></div>
</div></div><div class="dv"></div><div class="ti">Vos coordonnées</div><div class="ic"><svg width="16" height="16"><use href="#doc"/></svg></div><div class="dt" style="left:41px">4 juil. 2025</div><svg class="mv" style="left:159px"><use href="#mv"/></svg></div>

<div class="c" style="left:1056.3px;top:586px;width:184.7px"><div class="th" style="background:#eff5f5"><div class="f" style="left:35px;width:114.5px">
<svg class="ban" width="114.5" height="29.3"><use href="#bask"/></svg><div class="bar" style="top:34px;height:2px;background:#b7d3dd"></div>
<div class="w" style="top:36px;height:29px"><p class="h" style="left:4.5px;top:3px">Inscription pour recevoir un t-shirt</p><p style="left:4.5px;top:11px">Saisissez votre nom et la taille souhaitée et nous vous ferons parvenir un t-shirt.</p><p class="r" style="left:4.5px;top:22px">* Indique une question obligatoire</p></div>
<div class="w" style="top:68px;height:24px"><p style="left:4.5px;top:5px">Nom *</p><p style="left:4.5px;top:15px;color:#999">Votre réponse</p><div class="u" style="left:4.5px;top:18.5px;width:52px"></div></div>
<div class="w" style="top:95px;height:44px"><p style="left:4.5px;top:5px">Taille du t-shirt *</p><p style="left:10.5px;top:13px">XS</p><p style="left:10.5px;top:20px">S</p><p style="left:10.5px;top:27px">M</p><p style="left:10.5px;top:34.5px">L</p><p style="left:10.5px;top:41.5px">XL</p></div>
</div></div><div class="dv"></div><div class="ti" style="left:16.4px">Inscription pour recevoir ...</div><div class="ic"><svg width="16" height="16"><use href="#doc"/></svg></div><svg class="pp"><use href="#ppl"/></svg><div class="dt" style="left:61.5px">2 juil. 2025</div><svg class="mv"><use href="#mv"/></svg></div>

<!-- Row 3 -->
<div class="c" style="left:446px;top:821px"><div class="th" style="background:#f5f3f0"><div class="f" style="left:35.3px;width:114.4px">
<svg class="ban" width="114.4" height="29"><use href="#guitar"/></svg><div class="bar" style="top:34px;height:2px;background:#d7ccc8"></div>
<div class="w" style="top:36px;height:23px"><p class="h" style="left:4.5px;top:3px">Exemple de sondage</p><p class="r" style="left:4.5px;top:15.5px">* Indique une question obligatoire</p></div>
<div class="w" style="top:62px;height:60px"><p style="left:4.5px;top:5px">Quel âge avez-vous ?</p></div>
</div></div></div>

<div class="c" style="left:649.3px;top:821px"><div class="th" style="background:#f5f3f0"><div class="f" style="left:35.7px;width:114.3px">
<svg class="ban" width="114.3" height="29"><use href="#build"/></svg><div class="bar" style="top:34px;height:2px;background:#6d2f2a"></div>
<div class="w" style="top:36px;height:50px"><p class="h" style="left:4px;top:3px">Inscription au congrès</p><p style="left:4px;top:12px">Dates de l'événement : Du 4 au 6 janvier 2025</p><p style="left:4px;top:15.5px">Adresse de l'événement : 123 Rue de l'Anselme, 75002 Paris 2ème</p><p style="left:4px;top:19px">Contactez-nous au (01) 23 45 67 89 ou à l'adresse <span style="color:#4a70d8">vos_ventes@exemple.com</span></p><p class="r" style="left:4px;top:30.5px">* Indique une question obligatoire</p></div>
</div></div></div>

<div class="c" style="left:852.3px;top:821px"><div class="th" style="background:#f1f3f6"><div class="f" style="left:35.4px;width:114.5px">
<svg class="ban" width="114.5" height="29.3"><use href="#robot"/></svg><div class="bar" style="top:34px;height:2px;background:#b9c9d6"></div>
<div class="w" style="top:36px;height:50px"><p class="h" style="left:4px;top:3px">Bon de commande Robotics France</p><p style="left:4px;top:12px">Après avoir rempli ce formulaire, nous vous contacterons pour valider les détails et la</p><p style="left:4px;top:15.5px">disponibilité des articles. Pour un traitement plus rapide contactez-nous au (01)</p><p style="left:4px;top:19px">12 34 56 78 90 ou à <span style="color:#4a70d8">service.client@robotics.com</span></p><p class="r" style="left:4px;top:30.5px">* Indique une question obligatoire</p></div>
</div></div></div>

<div class="c" style="left:1056.3px;top:821px;width:184.7px"><div class="th" style="background:#f6f2f2"><div class="f" style="left:35px;width:114.5px">
<svg class="ban" width="114.5" height="29.3"><use href="#floral"/></svg><div class="bar" style="top:34px;height:2px;background:#7d3f3f"></div>
<div class="w" style="top:36px;height:50px"><p class="h" style="left:4.5px;top:3px">Formulaire de commande</p><p style="left:4.5px;top:11px">Une fois que vous aurez rempli ce formulaire, nous vous contacterons pour confirmer le</p><p style="left:4.5px;top:14.5px">détails de votre commande et la disponibilité des articles avant d'effectuer votre. Pour en</p><p style="left:4.5px;top:18px">savoir plus rapport à ces informations ou si elle concerne le service de livraison, veuillez nous</p><p style="left:4.5px;top:21.5px">contacter au (123) 456-7890 ou par email à <span style="color:#4a70d8">vos_ventes@exemple.com</span></p></div>
</div></div></div>
</div></body></html>
